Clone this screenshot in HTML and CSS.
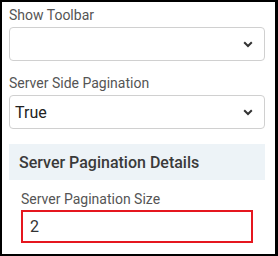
FILE: index.html
```html
<!DOCTYPE html>
<html>
<head>
  <meta name="viewport" content="width=device-width, initial-scale=1.0">
  <link rel="stylesheet" href="styles.css">
</head>
<body>
  <div class="frame">
    <div class="field">
      <label class="field-label">Show Toolbar</label>
      <div class="select">
        <span class="select-value"></span>
        <svg class="chevron" width="10" height="7" viewBox="0 0 10 7"><path d="M1.2 1.3 L5 5 L8.8 1.3" fill="none" stroke="#333" stroke-width="2"/></svg>
      </div>
    </div>

    <div class="field">
      <label class="field-label">Server Side Pagination</label>
      <div class="select">
        <span class="select-value">True</span>
        <svg class="chevron" width="10" height="7" viewBox="0 0 10 7"><path d="M1.2 1.3 L5 5 L8.8 1.3" fill="none" stroke="#333" stroke-width="2"/></svg>
      </div>
    </div>

    <div class="section">
      <div class="section-head">Server Pagination Details</div>
      <div class="section-body">
        <label class="field-label">Server Pagination Size</label>
        <div class="input error">2</div>
      </div>
    </div>
  </div>
</body>
</html>
```

FILE: styles.css
```css
* {
  margin: 0;
  padding: 0;
  box-sizing: border-box;
  font-family: 'Roboto', 'Liberation Sans', sans-serif;
}

body {
  background: #fff;
  overflow: hidden;
}

.frame {
  width: 278px;
  height: 256px;
  border: solid #000;
  border-width: 2px 3px 2px 2px;
  padding: 3px 10px 0 7px;
  overflow: hidden;
}

.field {
  margin-bottom: 12px;
}

.field-label {
  display: block;
  font-size: 14px;
  line-height: 20px;
  color: #555;
  margin-bottom: 2px;
}

.select {
  height: 34px;
  border: 1px solid #d0d0d0;
  border-radius: 4px;
  display: flex;
  align-items: center;
  justify-content: space-between;
  padding: 0 11px 0 5px;
}

.select-value {
  font-size: 16px;
  color: #222;
}

.chevron {
  display: block;
  margin-top: 1px;
}

.section {
  margin-top: 15px;
}

.section-head {
  background: #edf3f7;
  height: 36px;
  padding: 0 10px;
  display: flex;
  align-items: center;
  font-size: 16px;
  font-weight: 500;
  color: #3a3a3a;
}

.section-body {
  padding: 9px 12px 0 12px;
}

.section-body .field-label {
  margin-bottom: 1px;
}

.input {
  height: 33px;
  border: 1px solid #ccc;
  padding: 0 7px;
  display: flex;
  align-items: center;
  font-size: 16px;
  color: #333;
}

.input.error {
  border: 2px solid #e5171f;
}
```
